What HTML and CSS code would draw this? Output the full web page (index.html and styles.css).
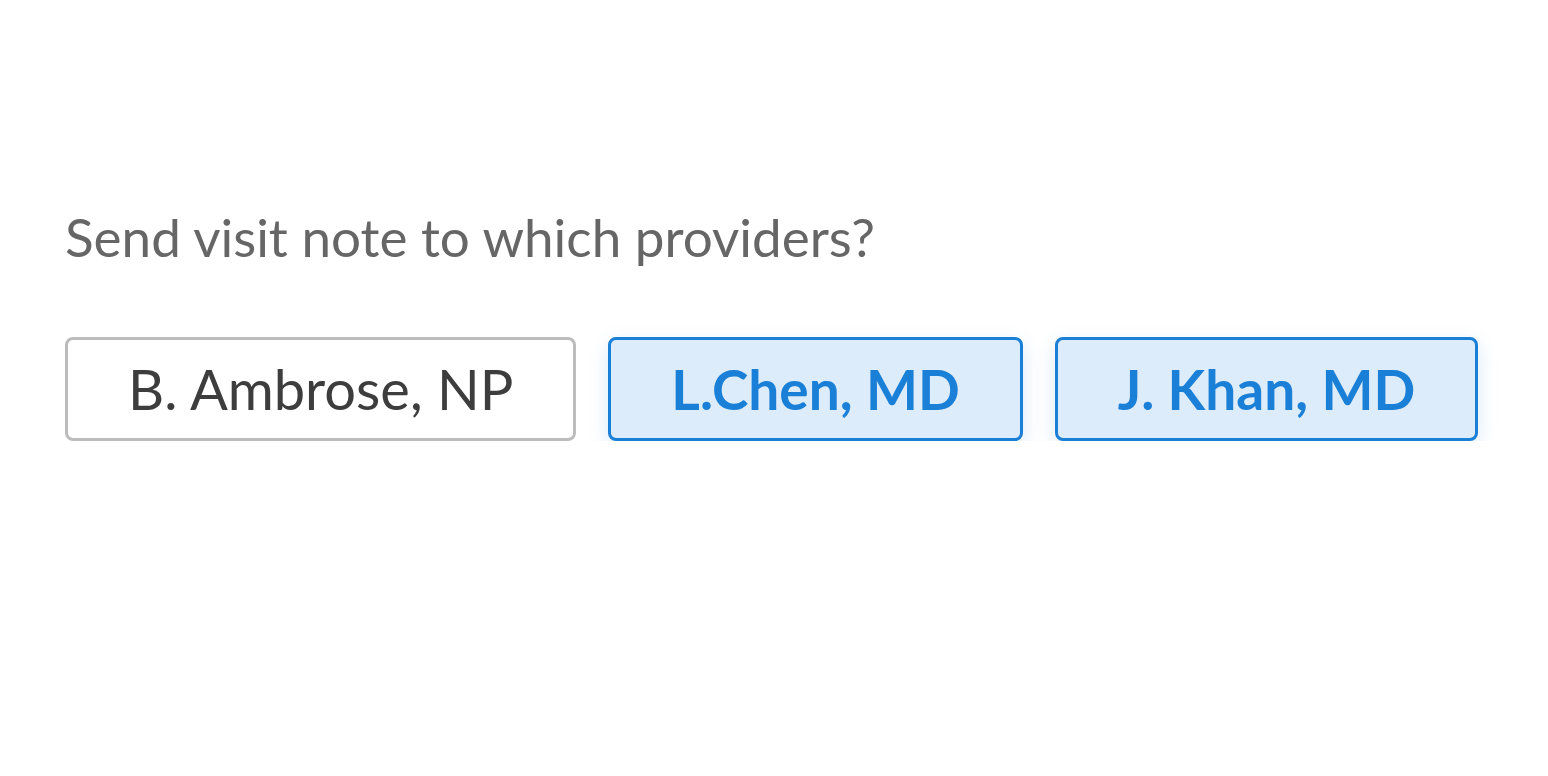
FILE: index.html
```html
<!DOCTYPE html>
<html lang="en">
<head>
    <meta charset="UTF-8">
    <title>Send visit note</title>
    <link rel="stylesheet" href="styles.css">
</head>
<body>
<div class="panel">
    <div class="question">Send visit note to which providers?</div>
    <div class="choices">
        <button class="choice">B. Ambrose, NP</button>
        <button class="choice selected">L.Chen, MD</button>
        <button class="choice selected">J. Khan, MD</button>
    </div>
</div>
</body>
</html>
```
FILE: styles.css
```css
body{
    margin: 0;
    background: #ffffff;
    font-family: Lato, "Noto Sans", sans-serif;
}
.panel{
    padding: 202px 0 0 65px;
}
.question{
    font-size: 53px;
    line-height: 70px;
    color: #666666;
}
.choices{
    display: flex;
    gap: 32px;
    margin-top: 65px;
}
.choice{
    flex: none;
    white-space: nowrap;
    font-family: inherit;
    font-size: 56px;
    line-height: 64px;
    padding: 17px 60px;
    border: 3px solid #bcbcbc;
    border-radius: 8px;
    background: #ffffff;
    color: #3d3d3d;
}
.choice.selected{
    font-weight: bold;
    font-size: 55px;
    border-color: #1a7fd6;
    background: #dcecfa;
    color: #1a7fd6;
    box-shadow: 0 6px 20px rgba(26, 127, 214, 0.16);
}
```
